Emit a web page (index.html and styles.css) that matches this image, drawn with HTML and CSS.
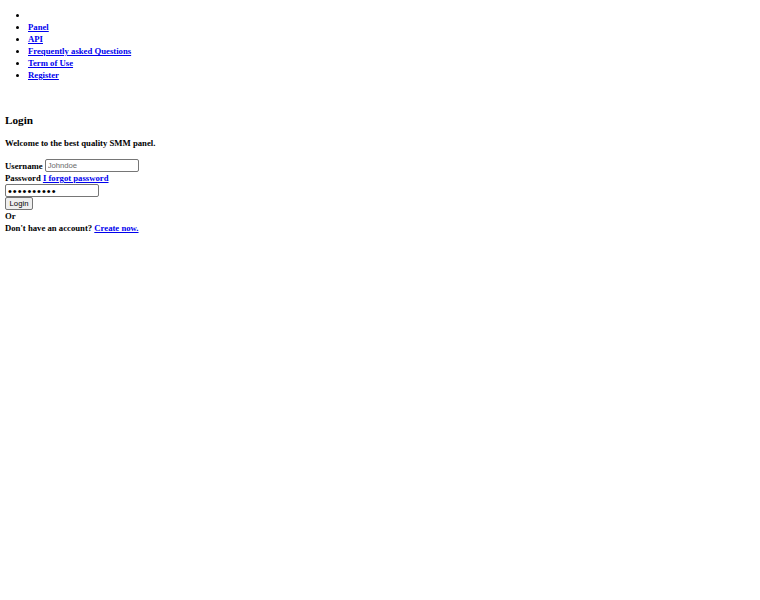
FILE: index.html
```html
<!DOCTYPE html>
<html lang="en">
<head>
<meta charset="utf-8">
<title>Login</title>
<link rel="stylesheet" href="styles.css">
</head>
<body>
<ul class="nav">
  <li></li>
  <li><a href="#">Panel</a></li>
  <li><a href="#">API</a></li>
  <li><a href="#">Frequently asked Questions</a></li>
  <li><a href="#">Term of Use</a></li>
  <li><a href="#">Register</a></li>
</ul>
<h3 class="title">Login</h3>
<p class="welcome">Welcome to the best quality SMM panel.</p>
<form class="form">
  <div class="row"><label class="label">Username</label><input class="field" type="text" placeholder="Johndoe"></div>
  <div class="line">Password <a href="#">I forgot password</a></div>
  <input class="field field-block field-pass" type="password" value="1234567890">
  <button class="btn" type="button">Login</button>
  <div class="line">Or</div>
  <div class="line">Don't have an account? <a href="#">Create now.</a></div>
</form>
</body>
</html>
```
FILE: styles.css
```css
html { background: #fff; }
body {
  margin: 0;
  padding: 0 5px;
  font-family: "Liberation Serif", "Times New Roman", serif;
  font-size: 8.7px;
  line-height: 12px;
  font-weight: bold;
  color: #000;
}
a { color: #0000ee; text-decoration: underline; }
.nav {
  margin: 9px 0 0;
  padding-left: 23px;
  list-style: disc;
}
.nav li { height: 12px; }
.title {
  margin: 32px 0 0;
  font-size: 11.2px;
  line-height: 14px;
}
.welcome { margin: 10px 0 0; }
.form { margin: 10px 0 0; }
.row {
  display: flex;
  align-items: center;
  gap: 2px;
  height: 13px;
}
.line { height: 12px; }
.field {
  box-sizing: border-box;
  width: 94px;
  height: 13px;
  margin: 0;
  padding: 0 2px;
  border: 1px solid #767676;
  border-radius: 2px;
  font-family: "Liberation Sans", Arial, sans-serif;
  font-size: 7.7px;
  background: #fff;
  color: #000;
}
.field::placeholder { color: #6a6a6a; }
.field-block { display: block; }
.field-pass { letter-spacing: 1px; font-size: 11px; line-height: 11px; }
.btn {
  display: block;
  box-sizing: border-box;
  width: 28px;
  height: 13px;
  margin: 0;
  padding: 0;
  border: 1px solid #767676;
  border-radius: 2px;
  background: #efefef;
  font-family: "Liberation Sans", Arial, sans-serif;
  font-size: 7.7px;
  color: #000;
}
```
